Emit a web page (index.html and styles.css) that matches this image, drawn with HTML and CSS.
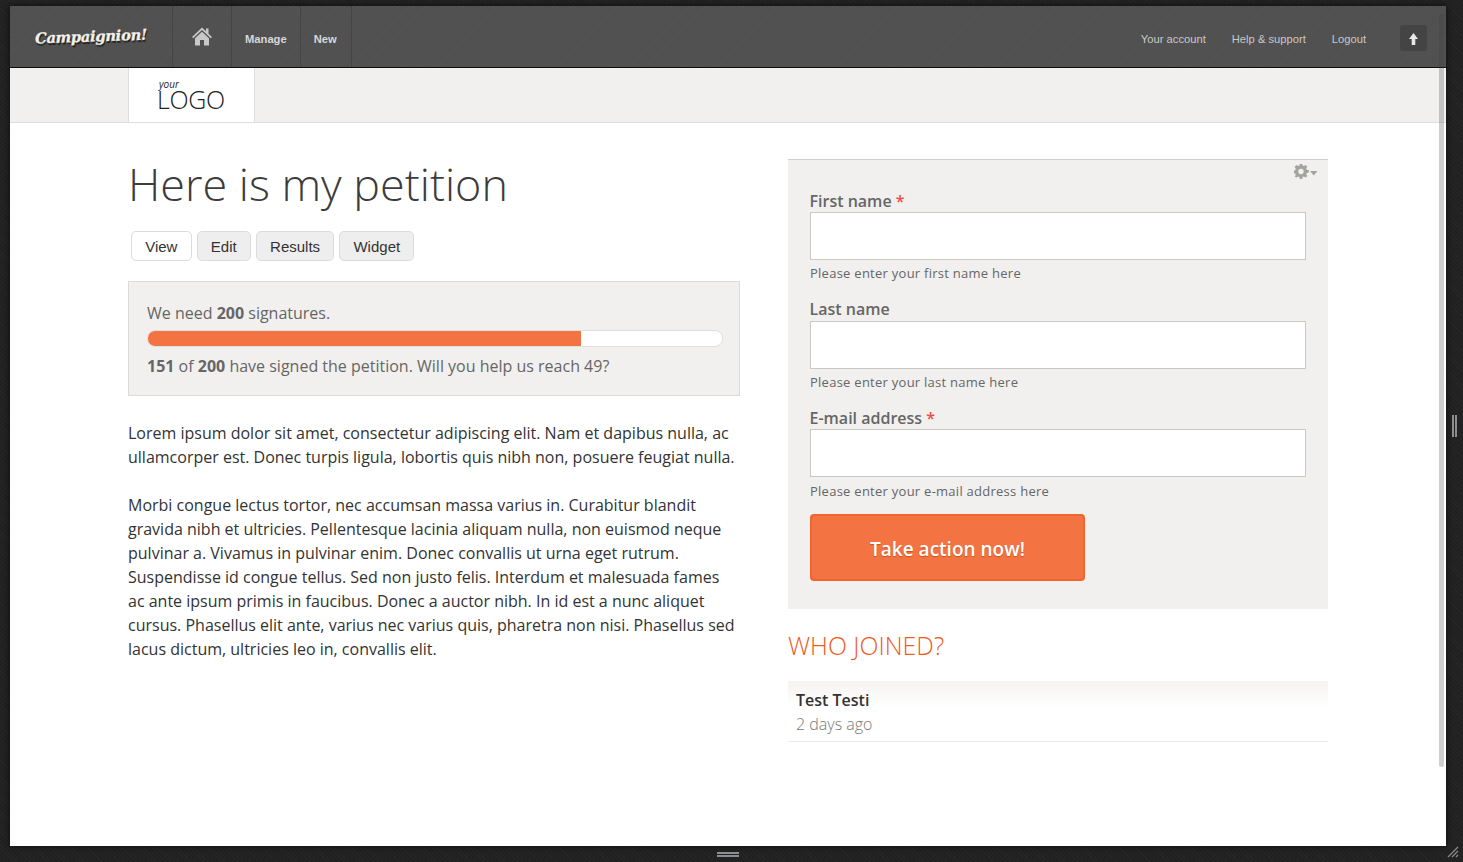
FILE: index.html
```html
<!DOCTYPE html>
<html lang="en">
<head>
<meta charset="utf-8">
<title>Here is my petition</title>
<link rel="stylesheet" href="styles.css">
</head>
<body>
<div class="window">
  <header class="topbar">
    <a class="brand">Campaignion!</a>
    <nav class="mainnav">
      <a class="navitem home" aria-label="Home">
        <svg width="20" height="19" viewBox="0 0 20 19"><path fill="#c8c8c8" d="M10 .5 0 10l1.2 1.2L10 3l8.800 8.200L20 10l-3.500-3.300V1.500h-2.500v2.800z"/><path fill="#c8c8c8" d="M10 4.800 3 11.200V18.500h5v-5.500h4v5.500h5v-7.300z"/></svg>
      </a>
      <a class="navitem">Manage</a>
      <a class="navitem last">New</a>
    </nav>
    <nav class="usernav">
      <a>Your account</a>
      <a>Help &amp; support</a>
      <a>Logout</a>
    </nav>
    <button class="upbtn" aria-label="Collapse">
      <svg width="9" height="12" viewBox="0 0 9 12"><path fill="#e8e8e8" d="M4.500 0 9 6H6.300v6H2.700V6H0z"/></svg>
    </button>
  </header>
  <div class="brandbar">
    <div class="logo"><span class="logo-your">your</span><span class="logo-main">LOGO</span></div>
  </div>
  <main class="content">
    <section class="left">
      <h1>Here is my petition</h1>
      <div class="tabs">
        <a class="tab active">View</a>
        <a class="tab">Edit</a>
        <a class="tab">Results</a>
        <a class="tab">Widget</a>
      </div>
      <div class="goal">
        <p class="goal-top">We need <b>200</b> signatures.</p>
        <div class="bar"><div class="bar-fill" style="width:75.5%"></div></div>
        <p class="goal-bottom"><b>151</b> of <b>200</b> have signed the petition. Will you help us reach 49?</p>
      </div>
      <p class="copy">Lorem ipsum dolor sit amet, consectetur adipiscing elit. Nam et dapibus nulla, ac ullamcorper est. Donec turpis ligula, lobortis quis nibh non, posuere feugiat nulla.</p>
      <p class="copy">Morbi congue lectus tortor, nec accumsan massa varius in. Curabitur blandit gravida nibh et ultricies. Pellentesque lacinia aliquam nulla, non euismod neque pulvinar a. Vivamus in pulvinar enim. Donec convallis ut urna eget rutrum. Suspendisse id congue tellus. Sed non justo felis. Interdum et malesuada fames ac ante ipsum primis in faucibus. Donec a auctor nibh. In id est a nunc aliquet cursus. Phasellus elit ante, varius nec varius quis, pharetra non nisi. Phasellus sed lacus dictum, ultricies leo in, convallis elit.</p>
    </section>
    <aside class="right">
      <form class="panel">
        <div class="gear" aria-label="Settings">
          <svg width="24" height="15" viewBox="0 0 24 15"><path fill="#a3a3a0" fill-rule="evenodd" d="M5.800 0h2.400l.4 2 1.300.6L11.600 1.500l1.700 1.700-1.100 1.700.6 1.300 2 .4v2.400l-2 .4-.6 1.300 1.100 1.700-1.700 1.700-1.700-1.100-1.300.6-.4 2H5.800l-.4-2-1.300-.6-1.700 1.100L.7 12.900l1.100-1.700-.6-1.300-2-.4V7.100l2-.4.6-1.300L.7 3.200 2.400 1.500l1.700 1.100 1.300-.6zM7 5.300a2.700 2.700 0 1 0 0 5.400 2.700 2.700 0 0 0 0-5.400z" transform="translate(0 -.5)"/><path fill="#a3a3a0" d="M16 7h7.500l-3.750 4.500z"/></svg>
        </div>
        <div class="field">
          <label class="label" for="fn">First name <span class="req">*</span></label>
          <input id="fn" class="input" type="text">
          <p class="help">Please enter your first name here</p>
        </div>
        <div class="field">
          <label class="label" for="ln">Last name</label>
          <input id="ln" class="input" type="text">
          <p class="help">Please enter your last name here</p>
        </div>
        <div class="field">
          <label class="label" for="em">E-mail address <span class="req">*</span></label>
          <input id="em" class="input" type="text">
          <p class="help">Please enter your e-mail address here</p>
        </div>
        <button class="cta" type="button">Take action now!</button>
      </form>
      <h2 class="joined">WHO JOINED?</h2>
      <div class="signer">
        <div class="signer-name">Test Testi</div>
        <div class="signer-time">2 days ago</div>
      </div>
    </aside>
    <div class="scrollbar"></div>
  </main>
</div>
<div class="grip-side"></div>
<div class="grip-bottom"></div>
<svg class="resize" width="12" height="12" viewBox="0 0 12 12"><path stroke="#8a8a8a" stroke-width="1.200" fill="none" d="M1 11 11 1M5 11l6-6M9 11l2-2"/></svg>
</body>
</html>
```

FILE: styles.css
```css
* { box-sizing: border-box; }
html, body { height: 100%; }
body {
  margin: 0;
  overflow: hidden;
  padding: 6px 17px 16px 10px;
  background-color: #212121;
  background-image: repeating-linear-gradient(45deg, rgba(255,255,255,.025) 0 1px, transparent 1px 3px);
  font-family: "Open Sans", sans-serif;
  color: #333;
}
a { text-decoration: none; }
p { margin: 0; }

.window {
  height: 840px;
  display: flex;
  flex-direction: column;
  background: #fff;
  box-shadow: 0 0 6px #0c0c0c;
}

.topbar {
  height: 62px;
  flex: none;
  display: flex;
  align-items: stretch;
  background-color: #505050;
  background-image: repeating-linear-gradient(135deg, rgba(255,255,255,.014) 0 1px, transparent 1px 3px);
  border-bottom: 1px solid #0d0d0d;
  font-family: "Liberation Sans", Arial, sans-serif;
}
.brand {
  width: 162px;
  padding: 22px 0 0 25px;
  font-family: "DejaVu Serif", serif;
  font-style: italic;
  font-weight: 700;
  font-size: 14.700px;
  line-height: 20px;
  color: #f1f0ea;
  letter-spacing: -.3px;
  -webkit-text-stroke: .3px #f1f0ea;
  text-shadow: 1px 2px 1px #1f1f1f;
  transform: rotate(-2deg);
  transform-origin: 40px 30px;
  white-space: nowrap;
}
.mainnav { display: flex; border-left: 1px solid #444; }
.navitem {
  display: flex;
  align-items: center;
  padding: 5px 13px 0;
  border-right: 1px solid #444;
  font-size: 11.200px;
  font-weight: 700;
  color: #d8d8d8;
}
.navitem.last { padding-right: 14px; }
.navitem.home { width: 59px; justify-content: center; padding: 0 1px 1px 0; }
.usernav {
  margin-left: auto;
  display: flex;
  align-items: center;
  gap: 26px;
  padding-top: 5px;
  font-size: 11.200px;
  color: #c8c8c8;
}
.upbtn {
  width: 27px;
  height: 26px;
  margin: 19px 19px 0 34px;
  padding: 1px 0 0;
  border: 0;
  border-radius: 3px;
  background: #444;
  display: flex;
  align-items: center;
  justify-content: center;
}

.brandbar {
  height: 55px;
  flex: none;
  padding-left: 118px;
  background: #f1f0ee;
  border-bottom: 1px solid #dfdedc;
}
.logo {
  position: relative;
  width: 127px;
  height: 54px;
  background: #fff;
  border-left: 1px solid #dfdedc;
  border-right: 1px solid #dfdedc;
  text-align: center;
  color: #222;
}
.logo-your {
  position: absolute;
  left: 30px;
  top: 10px;
  font-size: 10px;
  line-height: 13px;
  font-style: italic;
}
.logo-main {
  position: absolute;
  left: 28px;
  top: 13px;
  font-weight: 300;
  font-size: 25px;
  line-height: 37px;
  letter-spacing: -.3px;
}

.content {
  position: relative;
  flex: 1;
  display: flex;
  gap: 48px;
  padding: 36px 0 0 118px;
}
.left { width: 612px; flex: none; }
.right { width: 540px; flex: none; }

h1 {
  margin: -2px 0 0;
  font-weight: 300;
  font-size: 44.900px;
  line-height: 54px;
  color: #3c3c3c;
}
.tabs {
  display: flex;
  gap: 5px;
  margin: 20px 0 20px 3px;
  font-family: "Liberation Sans", Arial, sans-serif;
}
.tab {
  height: 30px;
  padding: 0 13.200px;
  border: 1px solid #dcdcdc;
  border-radius: 5px;
  background: #eeeeee;
  font-size: 15px;
  line-height: 29px;
  color: #333;
}
.tab.active { background: #fff; }

.goal {
  height: 115px;
  padding: 19px 16px 0 18px;
  margin-bottom: 25px;
  background: #f1f0ee;
  border: 1px solid #dcdbd9;
  color: #666;
  font-size: 16px;
  line-height: 24px;
}
.bar {
  height: 17px;
  margin: 5px 0 7px;
  background: #fff;
  border: 1px solid #e0dfdd;
  border-radius: 8px;
  overflow: hidden;
}
.bar-fill { height: 100%; background: #f37442; }
.goal-bottom { margin-top: 0; }

.copy {
  font-size: 16px;
  line-height: 24px;
  color: #333;
  margin-bottom: 24px;
}

.panel {
  position: relative;
  height: 450px;
  padding: 30px 22px 0;
  background: #f1f0ee;
  border-top: 1px solid #cfcfcd;
}
.gear { position: absolute; right: 10px; top: 4px; line-height: 0; }
.field { display: flow-root; height: 108.600px; }
.label {
  display: block;
  height: 22.400px;
  margin: -.4px 0 0 -.5px;
  font-size: 16px;
  font-weight: 600;
  line-height: 22px;
  color: #666;
}
.req { color: #ee4b45; }
.input {
  display: block;
  width: 496px;
  height: 48px;
  background: #fff;
  border: 1px solid #c8c8c8;
  border-radius: 0;
}
.help {
  margin-top: 4.400px;
  font-size: 13px;
  line-height: 18px;
  letter-spacing: .26px;
  color: #666;
}
.cta {
  display: block;
  width: 275px;
  height: 67px;
  margin-top: -1.500px;
  padding: 2px 0 0;
  background: #f37442;
  border: 2px solid #f2642c;
  border-radius: 4px;
  font-family: "Open Sans", sans-serif;
  font-size: 19px;
  font-weight: 600;
  color: #fff;
  text-shadow: 0 1px 1px rgba(170,60,10,.6);
}

.joined {
  margin: 19px 0 19px;
  font-size: 24.800px;
  font-weight: 300;
  line-height: 34px;
  color: #f05a24;
}
.signer {
  height: 61px;
  padding: 7px 8px 0;
  background: linear-gradient(#f4f3f1, #fff 26px);
  border-bottom: 1px solid #ecebe9;
}
.signer-name {
  font-size: 16px;
  font-weight: 600;
  line-height: 24px;
  color: #333;
}
.signer-time {
  font-size: 16px;
  font-weight: 300;
  line-height: 24px;
  color: #777;
}

.scrollbar {
  position: absolute;
  right: 2px;
  top: -109px;
  width: 5px;
  height: 753px;
  border-radius: 3px;
  background: rgba(60,60,60,.25);
}

.grip-side, .grip-bottom {
  position: absolute;
}
.grip-side {
  left: 1452px;
  top: 415px;
  width: 6px;
  height: 22px;
  background: linear-gradient(90deg, #8b8f93 0 2px, #222 2px 3px, #8b8f93 3px 5px, transparent 5px);
}
.grip-bottom {
  left: 717px;
  top: 852px;
  width: 22px;
  height: 5px;
  background: linear-gradient(#8b8f93 0 2px, #222 2px 3px, #8b8f93 3px 5px);
}
.resize { position: absolute; left: 1447px; top: 846px; }
```
